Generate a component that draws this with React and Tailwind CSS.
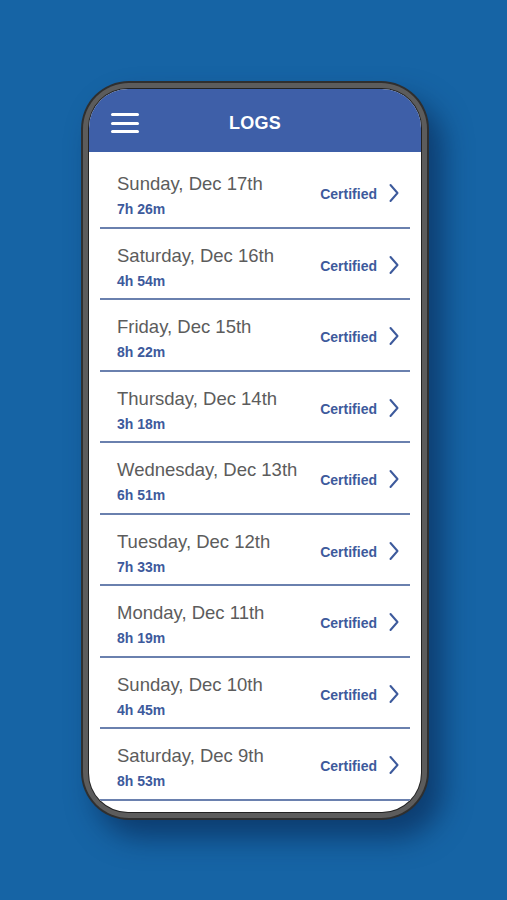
import React from "react";

const rows = [
  ["Sunday, Dec 17th", "7h 26m"],
  ["Saturday, Dec 16th", "4h 54m"],
  ["Friday, Dec 15th", "8h 22m"],
  ["Thursday, Dec 14th", "3h 18m"],
  ["Wednesday, Dec 13th", "6h 51m"],
  ["Tuesday, Dec 12th", "7h 33m"],
  ["Monday, Dec 11th", "8h 19m"],
  ["Sunday, Dec 10th", "4h 45m"],
  ["Saturday, Dec 9th", "8h 53m"],
];

function Chevron() {
  return (
    <svg width="12" height="20" viewBox="0 0 12 20" fill="none">
      <polyline points="2.5,2 9.5,10 2.5,18" stroke="#3d5a9c" strokeWidth="2" strokeLinecap="round" strokeLinejoin="round" />
    </svg>
  );
}

export default function App() {
  return (
    <div
      className="w-[507px] h-[900px] bg-[#1664a5] overflow-hidden pt-[81px] pl-[81px]"
      style={{ fontFamily: '"Liberation Sans", Arial, sans-serif' }}
    >
      <div className="w-[348px] h-[739px] rounded-[48px] bg-[#2f2f2f] p-[2px] shadow-[14px_18px_28px_rgba(5,30,70,0.55)]">
        <div className="w-full h-full rounded-[46px] bg-[#5c5c5c] p-[5px]">
          <div className="w-full h-full rounded-[40px] bg-[#222] p-[1px]">
            <div className="w-full h-full rounded-[39px] bg-white overflow-hidden flex flex-col">
              <div className="h-[63px] shrink-0 bg-[#3e5fa8] flex items-center relative">
                <div className="absolute left-[22px] top-[24px] flex flex-col gap-[5.5px]">
                  <div className="w-[28px] h-[3px] bg-white rounded-full" />
                  <div className="w-[28px] h-[3px] bg-white rounded-full" />
                  <div className="w-[28px] h-[3px] bg-white rounded-full" />
                </div>
                <div className="flex-1 text-center text-white font-bold text-[18px] tracking-[0.2px] pt-[6px]">
                  LOGS
                </div>
              </div>
              <div className="flex-1 overflow-hidden pt-[5px]">
                {rows.map(([d, t], i) => (
                  <div
                    key={i}
                    className="mx-[11px] h-[71.5px] border-b-2 border-[#6a80ae] flex items-start"
                  >
                    <div className="flex-1 pl-[17px] pt-[16px]">
                      <div className="text-[18.5px] leading-[22px] text-[#5c5c5c]">{d}</div>
                      <div className="text-[14px] leading-[16px] font-bold text-[#3d5a9c] mt-[6px]">{t}</div>
                    </div>
                    <div className="flex items-center gap-[11px] pr-[10px] pt-[26px]">
                      <span className="text-[14px] font-bold text-[#3d5a9c] leading-[16px] pt-[2px]">Certified</span>
                      <Chevron />
                    </div>
                  </div>
                ))}
              </div>
            </div>
          </div>
        </div>
      </div>
    </div>
  );
}
